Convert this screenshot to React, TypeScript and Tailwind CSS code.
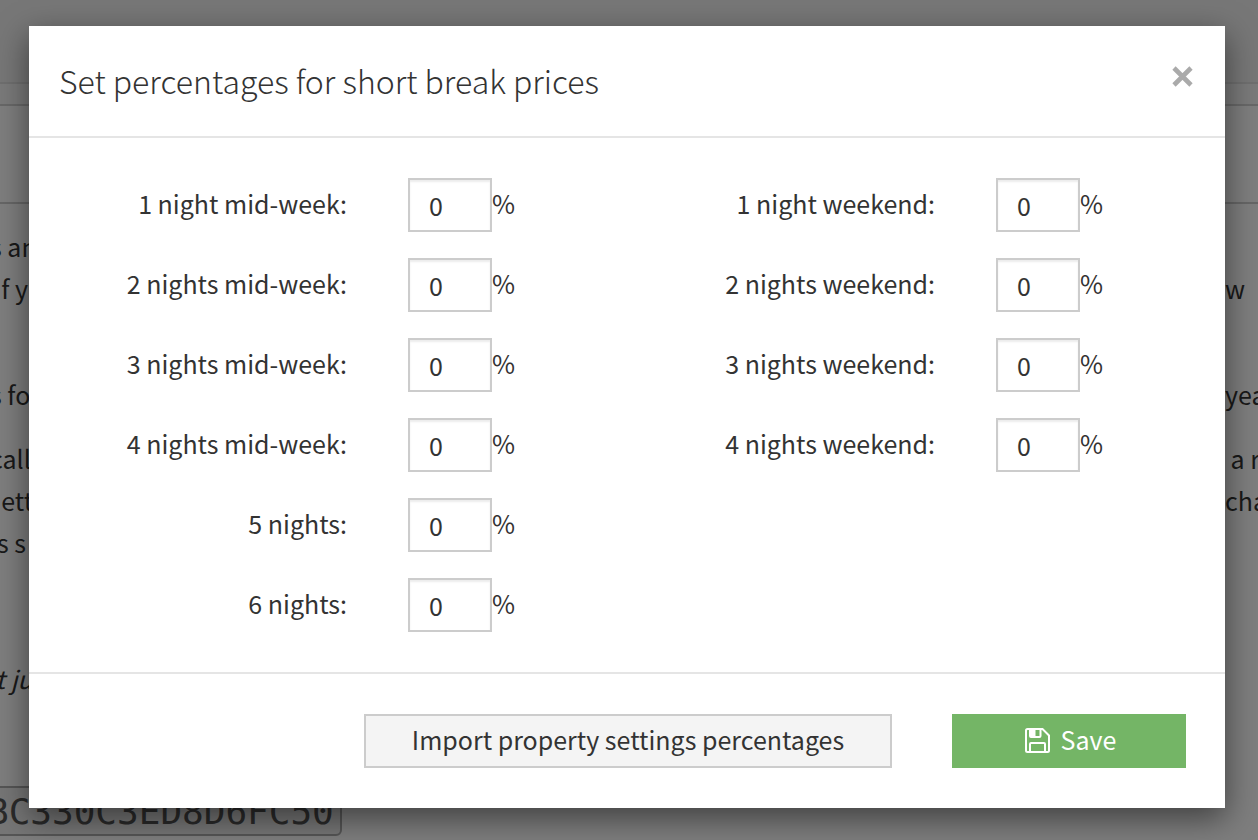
import React, { useState } from "react";

type Field = { id: string; label: string };

const midweek: Field[] = [
  { id: "mid1", label: "1 night mid-week:" },
  { id: "mid2", label: "2 nights mid-week:" },
  { id: "mid3", label: "3 nights mid-week:" },
  { id: "mid4", label: "4 nights mid-week:" },
  { id: "five", label: "5 nights:" },
  { id: "six", label: "6 nights:" },
];

const weekend: Field[] = [
  { id: "end1", label: "1 night weekend:" },
  { id: "end2", label: "2 nights weekend:" },
  { id: "end3", label: "3 nights weekend:" },
  { id: "end4", label: "4 nights weekend:" },
];

function PercentField({ id, label }: Field) {
  const [value, setValue] = useState("0");
  return (
    <div className="flex items-center">
      <label htmlFor={id} className="w-7/12 shrink-0 pr-[35px] pb-1 text-right">
        {label}
      </label>
      <input
        id={id}
        type="text"
        value={value}
        onChange={(e) => setValue(e.target.value)}
        className="ml-[26px] h-[54px] w-[84px] shrink-0 border-2 border-[#ccc] bg-white pl-[19px] shadow-[inset_0_2px_2px_rgba(0,0,0,0.075)] outline-none"
      />
      <span className="pb-1">%</span>
    </div>
  );
}

function FieldColumn({ fields }: { fields: Field[] }) {
  return (
    <div className="flex flex-col gap-[26px]">
      {fields.map((f) => (
        <PercentField key={f.id} {...f} />
      ))}
    </div>
  );
}

function SaveIcon() {
  return (
    <svg viewBox="0 0 25 25" className="size-[25px]" fill="none" stroke="currentColor" strokeWidth="2" aria-hidden="true">
      <path d="M2.500 1H17.500L24 7.500V22.500Q24 24 22.500 24H2.500Q1 24 1 22.500V2.500Q1 1 2.500 1Z" />
      <path d="M5 1V8Q5 9 6 9H14.500Q15.500 9 15.500 8V1" />
      <path d="M5 2H10.500V9H5Z" fill="currentColor" stroke="none" />
      <path d="M5 24V16Q5 15 6 15H19Q20 15 20 16V24" />
    </svg>
  );
}

function Line({ left, right }: { left?: string; right?: string }) {
  return (
    <p className="flex h-[42px] justify-between whitespace-nowrap">
      <span>{left}</span>
      <span className="w-[33px]">{right}</span>
    </p>
  );
}

function PageBehind() {
  return (
    <div className="h-full overflow-hidden bg-[#eee]" aria-hidden="true">
      <div className="h-[84px] border-b-2 border-[#dedede]" />
      <div className="h-[22px] border-b-2 border-[#d0d0d0] bg-[#f4f4f4]" />
      <div className="bg-[#fcfcfc]">
        <div className="h-[98px] border-b-2 border-[#ccc]" />
        <div className="-ml-[10px] pt-[21px] leading-[42px]">
          <Line left="s an" />
          <Line left={"\u00a0\u00a0f y"} right="w" />
          <div className="pt-16">
            <Line left="s fo" right="yea" />
          </div>
          <div className="pt-[22px]">
            <Line left="call" right={"\u00a0a r"} />
            <Line left={"\u00a0\u00a0ett"} right="cha" />
            <Line left="is s" />
          </div>
          <div className="pt-[94px] italic">
            <Line left={"\u00a0t ju"} />
          </div>
        </div>
        <div className="flex pt-[87px] pb-40">
          <code className="-ml-[15px] h-[50px] rounded-md border-2 border-[#aaa] bg-[#ececec] pr-1.5 font-['DejaVu_Sans_Mono',monospace] text-4xl leading-[48px] text-[#555]">
            BC330C3ED8D6FC50
          </code>
        </div>
      </div>
    </div>
  );
}

export default function App() {
  return (
    <div className="relative h-screen overflow-hidden font-['Noto_Sans_CJK_SC',sans-serif] text-[25px] text-[#333]">
      <PageBehind />
      <div className="absolute inset-0 bg-black/50 pt-[26px] pr-[33px] pl-[29px]">
        <div
          role="dialog"
          aria-labelledby="title"
          className="bg-white leading-[40px] shadow-[0_10px_30px_rgba(0,0,0,0.5)]"
        >
          <header className="flex items-start justify-between border-b-2 border-[#e5e5e5] pt-[30px] pr-8 pb-8 pl-[30px]">
            <h1 id="title" className="text-[32px] leading-[48px] font-light">
              Set percentages for short break prices
            </h1>
            <button type="button" aria-label="Close" className="mt-2.5 text-[#aaa]">
              <svg viewBox="0 0 21 21" className="size-[21px]" stroke="currentColor" strokeWidth="4.600" aria-hidden="true">
                <path d="M2 2L19 19M19 2L2 19" />
              </svg>
            </button>
          </header>
          <div className="grid grid-cols-2 px-[10px] py-10">
            <FieldColumn fields={midweek} />
            <FieldColumn fields={weekend} />
          </div>
          <footer className="flex justify-end gap-[60px] border-t-2 border-[#e5e5e5] py-10 pr-[39px]">
            <button type="button" className="h-[54px] w-[528px] border-2 border-[#ccc] bg-[#f4f4f4] pb-1">
              Import property settings percentages
            </button>
            <button
              type="button"
              className="flex h-[54px] w-[234px] items-center justify-center gap-[11px] bg-[#74b566] pb-0.5 pl-[3px] text-white"
            >
              <SaveIcon />
              <span className="pb-0.5">Save</span>
            </button>
          </footer>
        </div>
      </div>
    </div>
  );
}
